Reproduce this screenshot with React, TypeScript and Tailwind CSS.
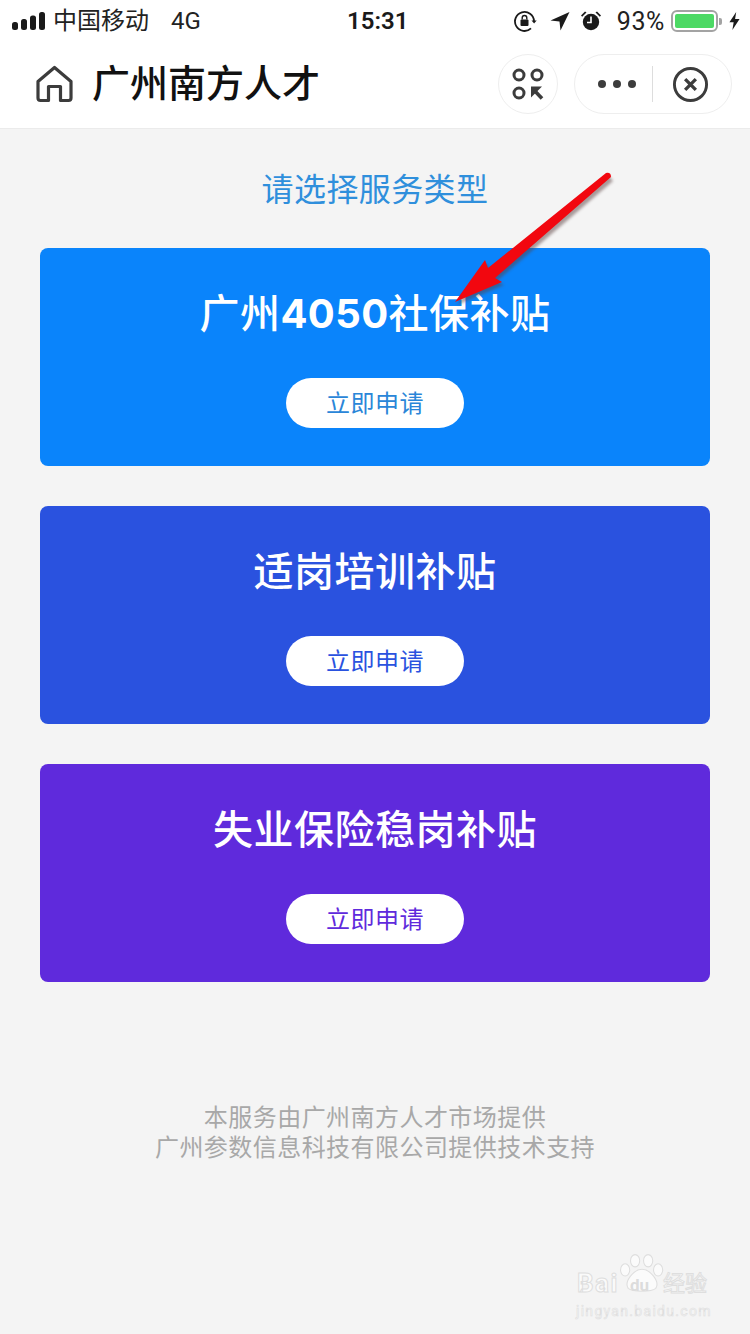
import type { ReactNode } from "react";

const sans = "font-['Roboto','Noto_Sans_CJK_SC',sans-serif]";

const services: { id: string; title: ReactNode; bg: string; fg: string }[] = [
  {
    id: "4050",
    title: (
      <>
        广州<span className="font-['Inter'] font-bold leading-none tracking-[0.4px]">4050</span>社保补贴
      </>
    ),
    bg: "bg-[#0a84fb]",
    fg: "text-[#2a86d8]",
  },
  { id: "training", title: "适岗培训补贴", bg: "bg-[#2a52df]", fg: "text-[#2a52df]" },
  { id: "insurance", title: "失业保险稳岗补贴", bg: "bg-[#5f2adc]", fg: "text-[#5f2adc]" },
];

function StatusBar() {
  return (
    <div className="relative flex h-[40px] items-center justify-between pl-[12px] pr-[10px] pt-[2px] text-[#1a1a1a]">
      <div className="flex items-center">
        <svg width="34" height="20" viewBox="0 0 34 20" fill="#1a1a1a">
          <rect x="0" y="11" width="6" height="8" rx="2.5" />
          <rect x="9" y="8" width="6" height="11" rx="2.5" />
          <rect x="18" y="4.5" width="6" height="14.5" rx="2.5" />
          <rect x="27" y="1" width="6" height="18" rx="2.5" />
        </svg>
        <span className="ml-[7px] text-[24px] leading-none text-[#222]">中国移动</span>
        <span className="ml-[22px] text-[24px] leading-none text-[#222]">4G</span>
      </div>
      <span className="absolute left-[347px] top-[6px] text-[24px] font-semibold leading-[30px]">15:31</span>
      <div className="flex items-center">
        <svg width="24" height="24" viewBox="0 0 24 24" fill="none" stroke="#1a1a1a" strokeWidth="1.8">
          <path d="M21 12a9.5 9.5 0 1 0-3 7.4" />
          <path d="M18.5 11.5 l2.6 3 2.6-3z" fill="#1a1a1a" stroke="none" />
          <rect x="7.5" y="10.5" width="8" height="6.5" rx="1" fill="#1a1a1a" stroke="none" />
          <path d="M9.2 10.5V8.8a2.3 2.3 0 0 1 4.6 0v1.7" strokeWidth="1.4" />
        </svg>
        <svg className="ml-[13px]" width="20" height="20" viewBox="0 0 20 20" fill="#1a1a1a">
          <path d="M19.5 1 L0.5 9.5 L9.5 10.5 L10.5 19.5z" />
        </svg>
        <svg className="ml-[10px]" width="22" height="22" viewBox="0 0 22 22" fill="#1a1a1a">
          <circle cx="11" cy="12" r="8.2" />
          <path d="M1 5.5 L5 1.5 L6.5 2.6 L2.2 6.8z M21 5.5 L17 1.5 L15.5 2.6 L19.8 6.8z" />
          <path d="M11 6.5V12.5H7" fill="none" stroke="#fff" strokeWidth="1.6" />
        </svg>
        <span className="ml-[15px] text-[25px] leading-none tracking-[0.6px] text-[#222]">93%</span>
        <div className="ml-[6px] flex h-[22px] w-[47px] items-center rounded-[6px] border-[2px] border-[#a3a3a3] p-[2px]">
          <div className="h-full w-full rounded-[2px] bg-[#4cd964]" />
        </div>
        <div className="ml-[1px] h-[7px] w-[3px] rounded-r-[2px] bg-[#a3a3a3]" />
        <svg className="ml-[7px]" width="11" height="20" viewBox="0 0 13 22" fill="#1a1a1a">
          <path d="M8.5 0.5 L0.5 12.5 H5.5 L4 21.5 L12.5 8.5 H7.2z" />
        </svg>
      </div>
    </div>
  );
}

function NavBar() {
  return (
    <div className="flex h-[89px] items-start justify-between border-b border-[#ebebeb] bg-white pl-[36px] pr-[18px] pt-[14px]">
      <div className="flex items-center pt-[6px]">
        <svg width="37" height="38" viewBox="0 0 37 38" fill="none" stroke="#3c3c3c" strokeWidth="3.2" strokeLinejoin="round">
          <path d="M12.5 35.5 H4.5 a2.5 2.5 0 0 1-2.5-2.5 V16.5 L18.5 2.5 L35 16.5 V33 a2.5 2.5 0 0 1-2.5 2.5 H24.5 V21.5 H12.5z" />
        </svg>
        <span className="ml-[19px] text-[38px] font-medium leading-[48px] text-[#111]">广州南方人才</span>
      </div>
      <div className="flex items-center gap-[16px]">
        <div className="flex h-[60px] w-[60px] items-center justify-center rounded-full border border-[#eeeeee]">
          <svg width="32" height="32" viewBox="0 0 32 32" fill="none" stroke="#3c3c3c" strokeWidth="3">
            <circle cx="7" cy="7" r="5" />
            <circle cx="25" cy="7" r="5" />
            <circle cx="7" cy="25" r="5" />
            <path d="M20.5 20.5 L30 30.5" strokeWidth="3.6" />
            <path d="M19 18.5 H30 L19 29.5z" fill="#3c3c3c" stroke="none" />
          </svg>
        </div>
        <div className="flex h-[60px] w-[158px] items-center rounded-full border border-[#eeeeee]">
          <div className="flex w-[77px] justify-center gap-[7px] pl-[6px]">
            <span className="h-[8px] w-[8px] rounded-full bg-[#3c3c3c]" />
            <span className="h-[8px] w-[8px] rounded-full bg-[#3c3c3c]" />
            <span className="h-[8px] w-[8px] rounded-full bg-[#3c3c3c]" />
          </div>
          <div className="h-[36px] w-px bg-[#dddddd]" />
          <div className="flex flex-1 justify-center pr-[4px]">
            <svg width="37" height="37" viewBox="0 0 38 38" fill="none" stroke="#3c3c3c" strokeWidth="3">
              <circle cx="19" cy="19" r="16.5" />
              <path d="M13.5 13.5 L24.5 24.5 M24.5 13.5 L13.5 24.5" strokeWidth="3.4" />
            </svg>
          </div>
        </div>
      </div>
    </div>
  );
}

function ServiceCard({ title, bg, fg }: { title: ReactNode; bg: string; fg: string }) {
  return (
    <div className={`flex h-[218px] flex-col items-center rounded-[8px] pt-[41px] ${bg}`}>
      <h2 className="h-[52px] text-[40px] font-medium leading-[52px] tracking-[0.5px] text-white">{title}</h2>
      <button className={`mt-[37px] h-[50px] w-[178px] rounded-full bg-white pt-[2px] text-[24px] tracking-[0.5px] ${fg}`}>
        立即申请
      </button>
    </div>
  );
}

function Arrow() {
  return (
    <svg className="pointer-events-none absolute left-0 top-0" width="750" height="400" viewBox="0 0 750 400">
      <path
        className="blur-[1.5px]"
        d="M611 178 L495 278 L502 282 L455 302 L485 260 L488 268 L606 172z"
        fill="#5a4040"
        opacity="0.5"
        transform="translate(2 3)"
      />
      <path
        d="M611 177 Q611 172 606 173 L488 268 L485 260 L455 302 L502 282 L495 278z"
        fill="#f2070f"
      />
    </svg>
  );
}

function Watermark() {
  return (
    <div className="pointer-events-none absolute left-[576px] top-[1252px] h-[70px] w-[140px]">
      <svg className="absolute left-[43px] top-0" width="46" height="42" viewBox="0 0 60 50" fill="#fbfbfb" stroke="#dedede" strokeWidth="1.4">
        <ellipse cx="8" cy="21" rx="6" ry="8" />
        <ellipse cx="21" cy="9" rx="6" ry="8" />
        <ellipse cx="38" cy="9" rx="6" ry="8" />
        <ellipse cx="51" cy="21" rx="6" ry="8" />
        <path d="M30 20 C40 20 54 36 48 45 C42 50 18 50 12 45 C6 36 20 20 30 20z" />
      </svg>
      <span className="absolute left-[1px] top-[16px] text-[26px] font-bold leading-[30px] tracking-[1.5px] text-[#fafafa] [-webkit-text-stroke:1px_#dedede]">
        Bai
      </span>
      <span className="absolute left-[54px] top-[22px] text-[17px] font-bold leading-[22px] text-[#dcdcdc]">du</span>
      <span className="absolute left-[87px] top-[19px] w-[50px] whitespace-nowrap text-[22px] leading-[26px] text-[#fafafa] [-webkit-text-stroke:1px_#dedede]">
        经验
      </span>
      <span className="absolute left-0 top-[50px] whitespace-nowrap text-[14px] leading-[18px] tracking-[1.3px] text-[#f9f9f9] [-webkit-text-stroke:0.6px_#dedede]">
        jingyan.baidu.com
      </span>
    </div>
  );
}

export default function App() {
  return (
    <div className={`relative h-[1334px] w-[750px] overflow-hidden bg-[#f4f4f4] ${sans}`}>
      <div className="bg-white">
        <StatusBar />
        <NavBar />
      </div>
      <p className="mt-[39px] text-center text-[32px] leading-[44px] tracking-[0.4px] text-[#2f8fdc]">请选择服务类型</p>
      <div className="mt-[36px] flex flex-col gap-[40px] px-[40px]">
        {services.map((s) => (
          <ServiceCard key={s.id} title={s.title} bg={s.bg} fg={s.fg} />
        ))}
      </div>
      <div className="mt-[121px] text-center text-[24px] leading-[30px] tracking-[0.45px] text-[#a8a8a8]">
        <p>本服务由广州南方人才市场提供</p>
        <p>广州参数信息科技有限公司提供技术支持</p>
      </div>
      <Arrow />
      <Watermark />
    </div>
  );
}
